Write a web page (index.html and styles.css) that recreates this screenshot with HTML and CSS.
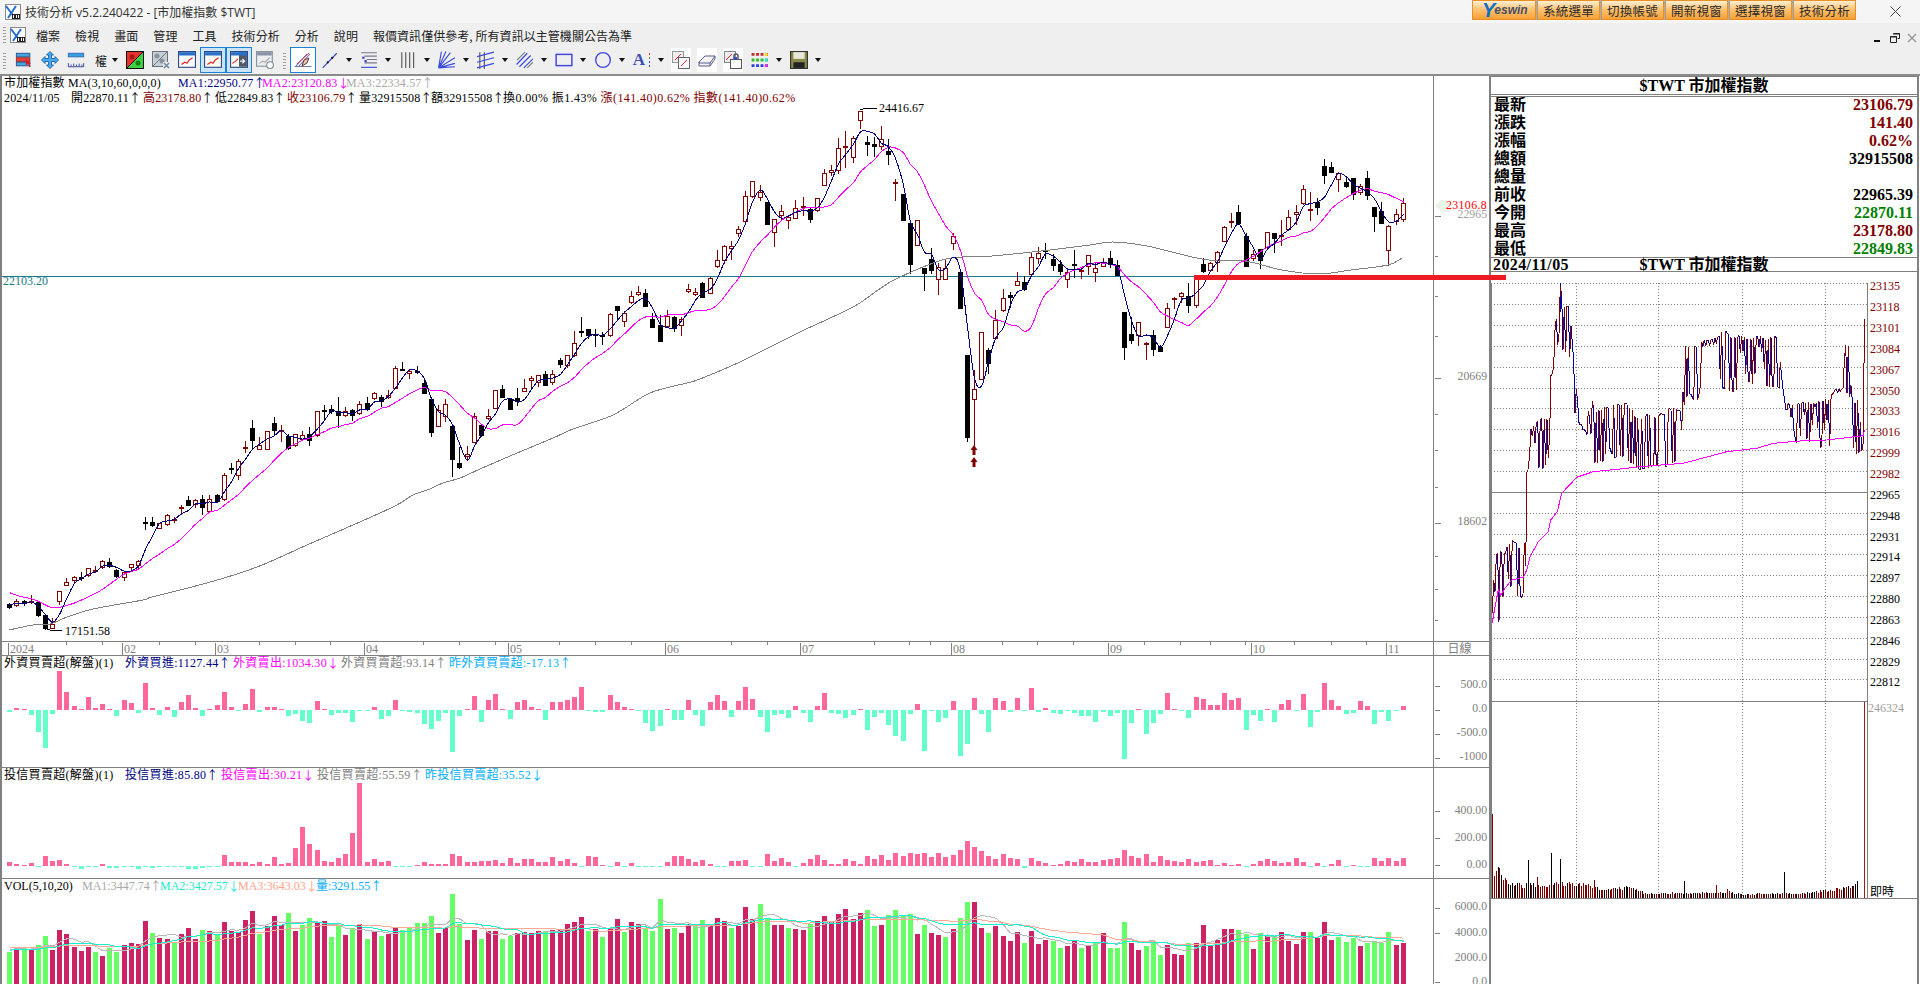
FILE: index.html
```html
<!DOCTYPE html>
<html lang="zh-Hant">
<head>
<meta charset="utf-8">
<title>技術分析 v5.2.240422 - [市加權指數 $TWT]</title>
<link rel="stylesheet" href="styles.css">
</head>
<body>
<div class="app">
  <header class="titlebar">
    <svg class="logo" viewBox="0 0 16 16"><rect x=".5" y=".5" width="15" height="15" fill="#fff" stroke="#8a8a8a"/><path d="M1 2l9 12M11 2L3 14" stroke="#1f6fd0" stroke-width="2" fill="none"/><rect x="7" y="10" width="8" height="5" fill="#222"/><rect x="8" y="11" width="1" height="3" fill="#fff"/><rect x="11" y="11" width="1" height="3" fill="#fff"/><rect x="13" y="11" width="1" height="3" fill="#fff"/></svg>
    <span class="title-text">技術分析 v5.2.240422 - [市加權指數 $TWT]</span>
    <div class="quick">
      <a class="quick-btn yeswin"><b class="y">Y</b><b>eswin</b></a>
      <a class="quick-btn">系統選單</a>
      <a class="quick-btn">切換帳號</a>
      <a class="quick-btn">開新視窗</a>
      <a class="quick-btn">選擇視窗</a>
      <a class="quick-btn">技術分析</a>
    </div>
    <a class="close"><svg viewBox="0 0 11 11" width="11" height="11"><path d="M.5.5l10 10M10.5.5l-10 10" stroke="#444" fill="none"/></svg></a>
  </header>

  <nav class="menubar">
    <i class="grip"></i>
    <svg class="logo" viewBox="0 0 16 16"><rect x=".5" y=".5" width="15" height="15" fill="#fff" stroke="#8a8a8a"/><path d="M1 2l9 12M11 2L3 14" stroke="#1f6fd0" stroke-width="2" fill="none"/><rect x="7" y="10" width="8" height="5" fill="#222"/><rect x="8" y="11" width="1" height="3" fill="#fff"/><rect x="11" y="11" width="1" height="3" fill="#fff"/><rect x="13" y="11" width="1" height="3" fill="#fff"/></svg>
    <ul class="menu">
      <li>檔案</li><li>檢視</li><li>畫面</li><li>管理</li><li>工具</li><li>技術分析</li><li>分析</li><li>說明</li><li>報價資訊僅供參考, 所有資訊以主管機關公告為準</li>
    </ul>
    <div class="win-ctrl">
      <svg viewBox="0 0 10 10" width="10" height="10"><rect x="1" y="7" width="6" height="2" fill="#111"/></svg>
      <svg viewBox="0 0 10 10" width="10" height="10"><path d="M3.5 .5h6v5h-2M.5 3.5h6v6h-6z" fill="none" stroke="#222"/><path d="M3 1h7M0 4h7" stroke="#222"/></svg>
      <svg viewBox="0 0 10 10" width="10" height="10"><path d="M1 1l8 8M9 1l-8 8" stroke="#9a9a9a" stroke-width="1.5" fill="none"/></svg>
    </div>
  </nav>

  <div class="toolbar">
    <i class="grip"></i>
    <span class="tool"><svg class="ic" viewBox="0 0 20 18"><rect x="1.5" y="1.5" width="15" height="4" fill="#45a3e0" stroke="#23568f"/><rect x="1.5" y="6.5" width="15" height="4" fill="#e8403a" stroke="#8f2a2a"/><rect x="1.5" y="11.5" width="15" height="4" fill="#45a3e0" stroke="#23568f"/><path d="M12 8l6 5h-2l1.500 3.500-1.500.5-1.500-3.500-2.500 1.500z" fill="#d8202c"/></svg></span>
    <span class="tool"><svg class="ic" viewBox="0 0 18 18"><path d="M9 .5l3.500 3.500H10.500v3.500H14V5.500L17.500 9 14 12.500V10.500h-3.500V14h2L9 17.500 5.500 14h2v-3.500H4v2L.5 9 4 5.500v2h3.500V4h-2z" fill="#45aaf0" stroke="#2a6aa8"/></svg></span>
    <span class="tool"><svg class="ic" viewBox="0 0 20 18"><rect x="1.500" y="1.500" width="17" height="4" fill="#3aa0e6" stroke="#2a6ab0"/><path d="M1.500 12.500v4h17v-4M4.500 14v2M7.500 13v3M10.500 14v2M13.500 13v3M16.500 14v2" fill="none" stroke="#2d3a9c"/></svg></span>
    <span class="tool narrow"><span class="tool-word">權</span></span><i class="drop"></i>
    <span class="tool"><svg class="ic" viewBox="0 0 18 18"><rect x=".5" y=".5" width="17" height="17" fill="#40d040" stroke="#111"/><path d="M1 1h16L1 17z" fill="#e8302c"/><path d="M17 1L1 17" stroke="#111"/><circle cx="6" cy="6" r="2.500" fill="#a01818"/><circle cx="12" cy="12" r="2.500" fill="#108010"/></svg></span>
    <span class="tool"><svg class="ic" viewBox="0 0 18 18"><rect x=".5" y=".5" width="15" height="15" fill="#c8ced6" stroke="#6a7380"/><path d="M15 1L1 15" stroke="#6a7380"/><circle cx="5" cy="5" r="2.500" fill="#8a929c"/><circle cx="10" cy="10" r="2.500" fill="#8a929c"/><rect x="11" y="11" width="7" height="7" fill="#e8ecf0"/><path d="M12 12l5 5M17 12l-5 5" stroke="#7088a0" stroke-width="1.500"/></svg></span>
    <span class="tool"><svg class="ic" viewBox="0 0 16 16"><rect x=".5" y=".5" width="15" height="14" fill="#fff" stroke="#2a4a8a"/><rect x="1" y="1" width="14" height="3" fill="#2a70c8"/><path d="M3 12l3-2 2 1 2-3 3-2" fill="none" stroke="#e02020"/></svg></span>
    <span class="tool on"><svg class="ic" viewBox="0 0 16 16"><rect x=".5" y=".5" width="15" height="14" fill="#fffdf0" stroke="#2a4a8a"/><rect x="1" y="1" width="14" height="3" fill="#2a70c8"/><path d="M3 12l3-2 2 1 2-3 3-2" fill="none" stroke="#e02020"/></svg></span>
    <span class="tool on"><svg class="ic" viewBox="0 0 16 16"><rect x=".5" y=".5" width="15" height="14" fill="#fffdf0" stroke="#2a4a8a"/><rect x="8" y="1" width="7" height="13" fill="#505a68"/><rect x="1" y="1" width="14" height="3" fill="#2a70c8"/><path d="M2 11l3-2 2-2" fill="none" stroke="#e02020"/><path d="M9 9h4M11 7l2 2-2 2" fill="none" stroke="#fff"/></svg></span>
    <span class="tool"><svg class="ic" viewBox="0 0 16 16"><rect x=".5" y=".5" width="14" height="13" fill="#eceef0" stroke="#8a94a0"/><rect x="1" y="1" width="13" height="3" fill="#8a94a8"/><path d="M3 11l3-2 2 1 4-4" fill="none" stroke="#a8a8a8"/><circle cx="12.500" cy="12.500" r="3" fill="#fff" stroke="#7a8a9a"/></svg></span>
    <i class="grip sep"></i>
    <span class="tool on plain"><svg class="ic" viewBox="0 0 18 18"><path d="M1 16L13 3M4 16L16 3" stroke="#3a5ac8" fill="none"/><path d="M3 13L15 2" stroke="#d83030" fill="none"/><path d="M.5 15.500h17" stroke="#6a7a9a"/><path d="M10 9l5-2-2 5-5 3z" fill="#d8c8b0" stroke="#803030"/></svg></span>
    <span class="tool gap"><svg class="ic" viewBox="0 0 16 16"><path d="M1.500 15L14 2" stroke="#3848c8"/><circle cx="6" cy="10" r="1" fill="#111"/><circle cx="10" cy="6" r="1" fill="#111"/></svg></span><i class="drop"></i>
    <span class="tool"><svg class="ic" viewBox="0 0 16 16"><path d="M1 1.500h14M4 4.500h11M6 7.500h9M4 10.500h11" stroke="#7a7a8a"/><path d="M1 14.500h14" stroke="#3848e0"/><rect x="2" y="5" width="2" height="2" fill="#3848e0"/><rect x="4" y="8" width="2" height="2" fill="#3848e0"/></svg></span><i class="drop"></i>
    <span class="tool"><svg class="ic" viewBox="0 0 14 16"><path d="M1.500 1v14M5 1v14M8.500 1v14M12 1v14" stroke="#555" fill="none"/></svg></span><i class="drop"></i>
    <span class="tool"><svg class="ic" viewBox="0 0 16 16"><path d="M.5 15L15 6M.5 15L15 11M.5 15L11 1.500M.5 15L7 .5M.5 15L3 .5M.5 15L15 14" stroke="#3848e0" fill="none"/></svg></span><i class="drop"></i>
    <span class="tool"><svg class="ic" viewBox="0 0 16 16"><path d="M2.500 1v15M6.500 1v15" stroke="#555"/><path d="M0 5l15-4M0 10l15-4M0 15l15-4" stroke="#3848e0"/></svg></span><i class="drop"></i>
    <span class="tool"><svg class="ic" viewBox="0 0 16 16"><path d="M.5 12L10 2M3 14L13 4M7 15L15 7" stroke="#3848e0" fill="none"/><path d="M1 8L8 1M10 15l5-5" stroke="#808080" fill="none"/></svg></span><i class="drop"></i>
    <span class="tool"><svg class="ic" viewBox="0 0 16 12"><rect x="1" y="1" width="14" height="10" fill="none" stroke="#4048e0" stroke-width="1.300"/></svg></span><i class="drop"></i>
    <span class="tool"><svg class="ic" viewBox="0 0 16 16"><circle cx="8" cy="8" r="6.500" fill="none" stroke="#4048e0" stroke-width="1.200"/></svg></span><i class="drop"></i>
    <span class="tool"><span class="tool-a">A</span><svg class="dots-a" viewBox="0 0 2 14"><rect width="1" height="2" fill="#d03030"/><rect y="4" width="1" height="2" fill="#30a030"/><rect y="8" width="1" height="2" fill="#3040d0"/><rect y="12" width="1" height="2" fill="#3040d0"/></svg></span><i class="drop"></i>
    <span class="tool box"><svg class="ic" viewBox="0 0 18 18"><rect x=".5" y=".5" width="11" height="11" fill="#eee" stroke="#999"/><rect x="6.500" y="6.500" width="11" height="11" fill="#fff" stroke="#666"/><path d="M3 9l6-6M9 15l6-6" stroke="#e02030"/></svg></span>
    <span class="tool box"><svg class="ic" viewBox="0 0 18 18"><path d="M1 11l6-6h10l-5 7H1zM1 11v4h11v-3M17 5v3l-5 7" fill="#f4f4f4" stroke="#555a90"/></svg></span>
    <span class="tool box"><svg class="ic" viewBox="0 0 18 18"><rect x=".5" y=".5" width="11" height="11" fill="#eee" stroke="#888"/><path d="M2 9l6-6" stroke="#e02030"/><rect x="6.500" y="8.500" width="11" height="9" fill="#fff" stroke="#556"/><path d="M10 8V5a2 2 0 014 0v3" fill="none" stroke="#556" stroke-width="1.500"/><rect x="10" y="6" width="3" height="3" fill="#3050c0"/></svg></span>
    <span class="tool gap"><svg class="ic" viewBox="0 0 16 14"><g stroke-width="2.600" stroke-dasharray="2.600 1.400" fill="none"><path d="M.5 2h15" stroke="#c03030"/><path d="M.5 7h15" stroke="#30c030"/><path d="M.5 12h15" stroke="#3040e0"/></g><circle cx="13.500" cy="2" r="1.400" fill="#f0e020"/><circle cx="13.500" cy="7" r="1.400" fill="#30e8f0"/><circle cx="13.500" cy="12" r="1.400" fill="#f030e0"/></svg></span><i class="drop"></i>
    <span class="tool"><svg class="ic" viewBox="0 0 16 16"><rect x=".5" y=".5" width="15" height="15" fill="#8a8a48" stroke="#333"/><rect x="3" y="1" width="10" height="6" fill="#e8e8d8"/><rect x="3" y="10" width="10" height="5" fill="#222"/></svg></span><i class="drop"></i>
  </div>

  <main class="workspace">
    <section class="charts">
      <div class="pane pane-price">
        <div class="plot">
          <svg class="gfx" id="price"></svg>
          <div class="legend legend-price">
            <div><span class="lead w174">市加權指數 MA(3,10,60,0,0,0)</span><span class="blk w84 navy">MA1:22950.77<i class="ar">↑</i></span><span class="blk w84 mag">MA2:23120.83<i class="ar">↓</i></span><span class="blk silver">MA3:22334.57<i class="ar">↑</i></span></div>
            <div><span class="lead w67">2024/11/05</span><span class="blk w72">開22870.11<i class="ar">↑</i></span><span class="blk w72"><span class="red">高23178.80</span><i class="ar">↑</i></span><span class="blk w72">低22849.83<i class="ar">↑</i></span><span class="blk w72"><span class="red">收23106.79</span><i class="ar">↑</i></span><span class="blk w72">量32915508<i class="ar">↑</i></span><span class="blk w72">額32915508<i class="ar">↑</i></span><span class="tail">換0.00% 振1.43% <span class="red">漲(141.40)0.62% 指數(141.40)0.62%</span></span></div>
          </div>
        </div>
        <svg class="gfx scale" id="price-scale"></svg>
      </div>
      <div class="pane pane-axis">
        <div class="plot"><svg class="gfx" id="axis"></svg></div>
        <div class="scale scale-word">日線</div>
      </div>
      <div class="pane pane-foreign">
        <div class="plot">
          <svg class="gfx" id="foreign"></svg>
          <div class="legend legend-ind"><span class="lead w121">外資買賣超(解盤)(1)</span><span class="blk w108 navy">外資買進:1127.44<i class="ar">↑</i></span><span class="blk w108 mag">外資賣出:1034.30<i class="ar">↓</i></span><span class="blk w108 gray">外資買賣超:93.14<i class="ar">↑</i></span><span class="blk sky">昨外資買賣超:-17.13<i class="ar">↑</i></span></div>
        </div>
        <svg class="gfx scale" id="foreign-scale"></svg>
      </div>
      <div class="pane pane-trust">
        <div class="plot">
          <svg class="gfx" id="trust"></svg>
          <div class="legend legend-ind"><span class="lead w121">投信買賣超(解盤)(1)</span><span class="blk w96 navy">投信買進:85.80<i class="ar">↑</i></span><span class="blk w96 mag">投信賣出:30.21<i class="ar">↓</i></span><span class="blk w108 gray">投信買賣超:55.59<i class="ar">↑</i></span><span class="blk sky">昨投信買賣超:35.52<i class="ar">↓</i></span></div>
        </div>
        <svg class="gfx scale" id="trust-scale"></svg>
      </div>
      <div class="pane pane-vol">
        <div class="plot">
          <svg class="gfx" id="vol"></svg>
          <div class="legend"><span class="lead w78">VOL(5,10,20)</span><span class="blk w78 silver">MA1:3447.74<i class="ar">↑</i></span><span class="blk w78 teal">MA2:3427.57<i class="ar">↓</i></span><span class="blk w78 salmon">MA3:3643.03<i class="ar">↓</i></span><span class="blk sky">量:3291.55<i class="ar">↑</i></span></div>
        </div>
        <svg class="gfx scale" id="vol-scale"></svg>
      </div>
    </section>

    <aside class="quote">
      <div class="quote-title">$TWT 市加權指數</div>
      <dl class="quote-table">
        <div><dt>最新</dt><dd class="red">23106.79</dd></div>
        <div><dt>漲跌</dt><dd class="red">141.40</dd></div>
        <div><dt>漲幅</dt><dd class="red">0.62%</dd></div>
        <div><dt>總額</dt><dd>32915508</dd></div>
        <div><dt>總量</dt><dd></dd></div>
        <div><dt>前收</dt><dd>22965.39</dd></div>
        <div><dt>今開</dt><dd class="green">22870.11</dd></div>
        <div><dt>最高</dt><dd class="red">23178.80</dd></div>
        <div><dt>最低</dt><dd class="green">22849.83</dd></div>
      </dl>
      <div class="quote-date"><span class="date">2024/11/05</span><span class="date-name">$TWT 市加權指數</span></div>
      <svg class="gfx intraday" id="intraday"></svg>
    </aside>

    <div class="mark-bar"></div>
  </main>
</div>
<script src="app.js"></script>
</body>
</html>
```

FILE: styles.css
```css
* { box-sizing: border-box; }
html, body { margin: 0; height: 100%; overflow: hidden; background: #fff; }
body { font: 12px "Liberation Serif", "Noto Sans CJK TC", serif; color: #000; }
.app { height: 984px; display: flex; flex-direction: column; }

.titlebar { height: 23px; flex: none; display: flex; align-items: center; background: #f5f5f5; padding-left: 5px;
  font: 12px "Open Sans", "Noto Sans CJK TC", sans-serif; color: #333; }
.logo { width: 16px; height: 16px; flex: none; }
.title-text { margin-left: 4px; white-space: nowrap; }
.quick { margin-left: auto; display: flex; gap: 1px; align-self: flex-start; height: 20px; background: #8fb0dc; }
.quick-btn { width: 63px; height: 20px; display: flex; align-items: center; justify-content: center; color: #2a2a2a;
  font: 12.500px "Noto Sans CJK TC", sans-serif; letter-spacing: .2px;
  border: 1px solid #ea8f20; border-radius: 1px; background: linear-gradient(#ffefd6, #ffc474 45%, #f7a036); }
.yeswin { width: 64px; font: italic 12px "Liberation Sans", sans-serif; color: #44506a; justify-content: flex-start; padding-left: 9px; }
.yeswin b { letter-spacing: 0; }
.yeswin .y { color: #0b6fc8; font-size: 20px; line-height: 16px; margin-right: -1px; }
.close { width: 46px; margin-left: 16px; margin-right: 2px; display: flex; justify-content: center; }

.menubar { height: 24px; flex: none; display: flex; align-items: center; background: #efefef; padding-left: 3px;
  font: 12px "Noto Sans CJK TC", sans-serif; color: #222; }
.grip { width: 3px; height: 16px; flex: none; background: repeating-linear-gradient(#a0a0a0 0 1px, transparent 1px 3px); }
.menubar .logo { margin-left: 4px; }
.menu { display: flex; list-style: none; margin: 0 0 0 2.500px; padding: 0; white-space: nowrap; }
.menu li { padding: 0 7.500px; letter-spacing: .05px; }
.win-ctrl { margin-left: auto; display: flex; gap: 7px; align-self: flex-start; margin-top: 10px; margin-right: 3px; }

.toolbar { height: 29px; flex: none; display: flex; align-items: flex-start; background: #efefef; border-bottom: 2px solid #8c8c8c; padding-left: 3px; }
.toolbar > .grip { align-self: center; margin-right: 4.500px; }
.tool { width: 26px; height: 26px; flex: none; display: flex; align-items: center; justify-content: center; position: relative; }
.tool.narrow { width: 20.500px; justify-content: flex-end; padding-right: 2px; }
.tool-word { font: 12px "Noto Sans CJK TC", sans-serif; color: #111; }
.tool.on { background: #cde4f7; border: 1.500px solid #1a80d8; }
.tool.plain { background: #fff; }
.tool.gap { margin-left: 1px; }
.tool.box { background: #fff; height: 24px; width: 20px; margin: 1px 3px; }
.ic { width: 18px; height: 18px; }
.grip.sep { width: 3px; margin: 0 4px 0 5px; align-self: center; }
.drop { width: 13px; height: 26px; flex: none; position: relative; }
.drop::after { content: ""; position: absolute; left: 3px; top: 11px; border: 3.500px solid transparent; border-top: 4px solid #111; border-bottom: 0; }
.tool-a { font: bold 17px "Liberation Serif", serif; color: #3a4db0; margin-right: 4px; }
.dots-a { width: 2px; height: 14px; }

.workspace { flex: 1; min-height: 0; display: flex; position: relative; overflow: hidden; }
.charts { width: 1489px; flex: none; display: flex; flex-direction: column; border-left: 2px solid #808080; }
.pane { display: flex; flex: none; border-bottom: 1px solid #808080; }
.pane-price { height: 566px; }
.pane-axis { height: 14px; }
.pane-foreign { height: 112px; }
.pane-trust { height: 111px; }
.pane-vol { flex: 1; min-height: 0; border-bottom: 0; }
.plot { width: 1431px; flex: none; position: relative; overflow: hidden; }
.plot .gfx { width: 100%; height: 100%; }
.gfx { display: block; }
.scale { flex: 1; min-width: 0; height: 100%; border-left: 1px solid #808080; }
.scale-word { display: flex; justify-content: center; padding-right: 4px; line-height: 15px; color: #808080; }

.legend { position: absolute; left: 2px; top: 0; white-space: nowrap; line-height: 14px; height: 14px; }
.legend-price { line-height: 15px; height: 30px; letter-spacing: .15px; }
.legend-price > div { height: 15px; }
.legend-ind { letter-spacing: .3px; }
.lead, .blk { display: inline-block; vertical-align: top; }
.tail { letter-spacing: .4px; }
.ar { display: inline-block; width: 11px; height: 14px; text-align: center; font: 12px/14px "Noto Sans CJK TC", sans-serif; letter-spacing: 0; vertical-align: top; }
.w67 { width: 67px; }
.w72 { width: 72px; }
.w78 { width: 78px; }
.w84 { width: 84px; }
.w96 { width: 96px; }
.w108 { width: 108px; }
.w121 { width: 121px; }
.w174 { width: 174px; }
.navy { color: #000080; }
.mag { color: #f0f; }
.gray { color: #808080; }
.sky { color: #00aeff; }
.silver { color: #a8a8a8; }
.teal { color: #19e8c8; }
.salmon { color: #ffa48c; }
.red { color: #800000; }
.green { color: #008000; }

.quote { flex: 1; min-width: 0; display: flex; flex-direction: column; border-left: 2px solid #808080; border-right: 2px solid #808080; margin-right: 1px;
  font: 16px "Liberation Serif", "Noto Sans CJK TC", serif; }
.quote-title { height: 21px; flex: none; border-top: 1px solid #808080; border-bottom: 3px double #808080; text-align: center; font-weight: 700; line-height: 18px; overflow: hidden; }
.quote-table { height: 160px; flex: none; margin: 0; overflow: hidden; }
.quote-table div { height: 18px; line-height: 16px; display: flex; justify-content: space-between; padding: 0 4px 0 3px; font-weight: 700; }
.quote-table dt, .quote-table dd { margin: 0; }
.quote-date { height: 15px; flex: none; position: relative; border-top: 1px solid #808080; border-bottom: 1px solid #808080; line-height: 14px; font-weight: 700; text-align: center; }
.date { position: absolute; left: 2px; top: 0; letter-spacing: .4px; }
.intraday { flex: 1; min-height: 0; width: 100%; }

.mark-bar { position: absolute; left: 1194px; top: 199px; width: 312px; height: 5px; background: #ed1c24; }

.gfx text { font: 12px "Liberation Serif", "Noto Sans CJK TC", serif; }
.gfx .t-black { fill: #000; }
.gfx .t-gray { fill: #808080; }
.gfx .t-lgray { fill: #a0a0a0; }
.gfx .t-red { fill: #f00; letter-spacing: .4px; }
.gfx .t-maroon { fill: #800000; }
.gfx .t-teal { fill: #1b7b87; }
.crisp { shape-rendering: crispEdges; }
.ma { fill: none; stroke-width: 1; shape-rendering: crispEdges; }
```

FILE: app.js
```js
// Data below is recorded in pixels of the chart image; every SVG's viewBox equals its page box, so y/x are page coordinates.
const X0 = 9.3, DX = 7.146;
const xAt = i => Math.round(X0 + i * DX);
const parseGroup = (oy, s) => s.trim().split(/\s+/).map(t => {
  const [hi, top, bot, lo] = t.slice(1).split(',').map(v => oy + v / 3);
  return { up: t[0] === 'u', hi, top, bot, lo };
});
const candles = [
  ...parseGroup(400, `d610,612,620,624 u598,604,616,618 d600,604,609,616 u586,604,607,609 d604,607,645,648 d644,645,684,686 u655,672,683,684 u574,574,602,612 u535,546,554,554 u528,531,540,546 d517,530,532,540 u503,505,526,528 u498,509,511,516 u480,482,502,505 d474,487,497,500 d508,511,528,530 u512,516,530,540 u492,493,502,510 u480,484,494,503 d350,365,367,386 d350,366,374,377 u368,370,383,384 u343,344,373,375 u350,358,360,366 u316,322,325,343 d288,300,314,315 u296,300,312,320 d285,298,320,342 u285,298,332,333 d283,286,302,304 u220,226,298,300 d190,205,207,218 u178,184,226,236 u122,141,143,155 d60,85,120,144 u112,136,146,148 u92,94,146,146 d52,70,90,106 u74,90,94,123 d102,108,143,146 u102,103,136,138 u94,106,118,120 d80,103,120,134 u32,34,106,108 d14,29,31,60 d14,28,34,38 d-9,32,46,80 u22,34,44,48 d28,30,44,60 u4,12,40,42 d-10,8,27,30`),
  ...parseGroup(220, `u517,518,535,536 d525,532,544,557 u510,525,532,534 u438,445,503,505 d426,448,450,450 u450,454,459,474 d438,452,456,460 d480,488,518,518 d530,537,636,648 u555,570,617,617 u537,553,588,602 d612,618,717,768 d680,729,742,744 u678,703,709,720 u580,589,665,667 d612,615,645,647 u568,589,594,598 u510,511,563,565 d495,507,530,532 d536,538,566,567 d504,534,544,556 u478,505,512,513 u468,474,479,506 u465,466,486,498 d454,463,494,495 u451,463,487,491 d414,420,432,440 u404,406,434,440 u334,370,404,407 d292,333,335,347 d328,328,344,354 d327,343,346,378 d335,346,349,371 u280,283,346,347 d258,259,269,295 u272,280,304,317 u212,229,247,249 u198,217,223,224 d207,220,257,258 d280,297,320,320 d285,316,362,362 u270,287,317,320 d288,291,323,332 u292,298,316,345 u193,208,214,216 u205,217,223,225`),
  ...parseGroup(100, `d545,549,590,590 u530,535,578,580 u450,481,498,500 u435,439,479,490 u423,437,443,478 u378,386,398,408 u273,287,362,365 u243,244,288,290 u256,277,290,300 d305,306,371,372 u358,358,395,438 u315,334,345,356 u350,352,359,385 u300,325,353,355 u292,318,322,345 d325,327,357,366 u295,295,330,332 u207,220,254,255 u196,211,216,225 u113,145,211,220 u92,137,141,200 u108,115,170,186 u32,34,61,84 d108,126,133,165 d112,131,139,168 u78,118,139,147 d118,152,163,192 u237,245,250,300 d282,282,359,360 d368,369,491,518 u360,361,434,435 d503,503,518,570 d445,478,510,518 u490,500,536,582`),
  ...parseGroup(90, `u510,535,566,567 u430,439,458,477 d545,547,653,654 d794,795,1041,1052 u840,898,928,1065 u726,727,866,866 d775,781,819,850 u660,690,743,745 u598,625,661,663 d605,614,620,650 u545,572,584,585 d557,577,597,599 u490,502,551,553 u472,490,503,520 d460,479,483,505 d492,507,525,540 d510,522,542,553 u540,545,566,590 d480,522,525,560 u530,540,543,564 u495,496,527,552 u515,535,545,572 u503,517,527,527 d483,505,522,530 d510,525,555,556 d666,666,770,806 d680,732,750,760 u695,697,735,765 u755,758,762,806 d720,736,776,795 d765,770,782,783 u640,653,710,711 u622,625,628,655 u605,610,618,635 d580,617,645,665 u567,568,645,652 d503,522,543,547 u515,518,540,542 u484,485,515,543 u408,412,452,453 u370,393,396,410 d345,367,400,401 d428,438,527,528 u480,493,503,510 d478,478,510,533 u425,427,472,473 d428,428,444,485 u390,435,438,465 u360,382,418,420 u345,367,371,403 u285,298,340,343 u305,358,361,390 d325,335,350,372 d207,229,256,278 d215,231,245,246 u247,250,268,303 d265,276,287,292 d265,265,312,328 u283,287,307,312 d243,265,316,326 d350,351,377,423 d335,364,399,400 u405,409,481,525 u357,371,394,403 u325,340,388,392`)
];

const foreign = [-5,5,3,-15,-66,-114,-11,117,54,12,3,39,6,18,3,-18,30,21,-8,81,6,-15,9,-21,24,45,6,-18,3,15,54,9,-3,18,63,-6,9,9,2,-18,-12,-33,-39,27,3,-15,-9,-9,-36,-2,-2,9,-27,-18,30,-3,-6,-9,-42,-57,-33,-9,-126,-18,2,42,-36,30,48,3,-27,24,30,9,3,-30,24,24,30,39,69,-3,-6,-6,45,24,9,3,-3,-39,-63,-48,3,-30,-30,30,-15,
  -48,24,45,27,-21,27,69,33,-21,-66,-15,-12,-24,12,-9,-36,12,51,-9,-12,-24,-15,3,-60,-21,-9,-45,-78,-93,-12,18,-123,-3,-36,-24,27,-138,-102,36,-12,-66,36,27,-6,36,-3,66,-6,6,-9,-12,-3,-9,-18,-18,-36,-6,-18,-9,-147,-39,2,-72,-39,-12,51,3,-3,-24,39,33,15,15,51,30,36,-60,-15,-33,3,-36,18,30,-3,48,-51,-6,81,30,12,-12,-9,27,12,-42,-6,-33,-3,12];
const trust = [12,6,3,9,-2,30,15,18,6,-2,-8,-2,-2,6,-6,-5,-2,-2,-8,-2,-6,-2,-3,-2,-2,-8,-9,-6,-2,-2,33,12,12,12,6,12,6,27,6,9,54,117,66,48,15,12,24,36,99,249,12,21,12,15,-2,-2,-2,3,12,6,6,6,36,30,12,12,15,15,18,9,24,9,21,21,12,12,27,15,21,9,-3,30,27,2,-2,12,-3,9,-3,-2,-2,-3,12,30,30,21,12,
  18,6,-2,-2,15,15,18,-2,-2,36,15,24,12,-2,9,21,33,18,6,6,21,15,6,30,21,33,18,39,30,39,36,39,27,39,27,33,48,75,57,45,30,21,36,24,21,-5,24,15,9,3,6,15,12,21,12,12,18,21,24,48,30,24,36,12,30,18,15,12,21,12,15,18,3,9,3,6,-2,6,15,21,15,9,12,24,12,-2,9,-2,6,18,-2,3,-2,-2,24,15,24,15,24];
const volA = `g1176 r1160 g1165 r1170 g1155 g1128 r1170 r1110 r1122 r1160 r1173 r1160 g1176 r1188 g1163 g1176 r1155 r1149 r1152 r1083 g1119 r1134 r1137 g1146 r1122 r1104 r1137 g1110 r1113 g1125 r1086 r1113 r1116 r1080 r1053 g1122 r1098 r1068 r1095 g1059 r1113 g1095 g1074 r1089 r1083 g1131 g1095 r1125 g1104 r1092 g1137 r1116 g1128 r1122 r1104 g1110 g1104 g1089 g1089 g1068 r1119 r1104 g1002 g1092 r1140 r1110 g1137 r1113 r1113 g1137 g1128 r1119 r1116 r1119 r1113 g1113 r1110 r1110 r1092 r1086 r1071 g1113 r1107 g1131 r1107 r1077 g1116 r1086 r1092 g1104 g1113 g1017 r1107 g1104 r1119 r1092 g1098`;
const volB = `g840 r859 r834 r843 g864 r857 r801 r837 g792 g838 r855 r855 g864 r867 r870 g852 r843 r828 r846 r822 r807 r837 r819 g810 g858 r855 g825 g810 g825 g822 r882 g855 r879 r885 g891 r867 g834 g786 r786 r864 g879 r858 r888 r903 r876 g909 r873 r912 r900 g903 g924 r917 r900 g924 r917 g910 r879 g924 g924 g846 r909 r930 g918 g903 g945 r915 r942 r945 g909 r909 r855 r917 r900 r867 r867 g870 g882 r927 g879 r885 g888 r876 r903 r912 r876 g876 r894 r846 r900 g891 g906 g894 r918 g909 g903 g909 g876 r915 r909`;
const vol = [...volA.trim().split(/\s+/).map(t => ({ up: t[0] === 'r', top: 560 + t.slice(1) / 3 })),
             ...volB.trim().split(/\s+/).map(t => ({ up: t[0] === 'r', top: 640 + t.slice(1) / 3 }))];

const ma3Curve = [[9,630],[33,625],[50,624],[67,617],[93,609],[143,600],[152,597],[207,583],[240,573],[267,563],[307,545],[330,535],[393,507],[413,495],[430,489],[443,483],[460,478],[480,469],[510,456],[553,438],[573,429],[613,415],[650,393],[687,383],[700,379],[740,362],[780,342],[804,330],[853,307],[878,290],[894,280],[923,267],[951,258],[992,256],[1041,251],[1090,245],[1113,242],[1147,246],[1188,256],[1209,260],[1245,261],[1282,270],[1319,274],[1351,270],[1388,265],[1402,258]];

function movingAvg(values, n, seed) {
  const all = [...seed, ...values];
  return values.map((_, i) => {
    const end = seed.length + i + 1, win = all.slice(Math.max(0, end - n), end);
    return win.reduce((a, b) => a + b, 0) / win.length;
  });
}
function spline(p) {
  let d = `M${p[0][0]} ${p[0][1].toFixed(1)}`;
  for (let i = 0; i < p.length - 1; i++) {
    const a = p[i - 1] || p[i], b = p[i], c = p[i + 1], e = p[i + 2] || c;
    d += `C${(b[0] + (c[0] - a[0]) / 6).toFixed(1)} ${(b[1] + (c[1] - a[1]) / 6).toFixed(1)} ${(c[0] - (e[0] - b[0]) / 6).toFixed(1)} ${(c[1] - (e[1] - b[1]) / 6).toFixed(1)} ${c[0]} ${c[1].toFixed(1)}`;
  }
  return d;
}
const maPath = (ys, color, w = 1) => `<path class="ma" d="${spline(ys.map((y, i) => [xAt(i) + .5, y]))}" stroke="${color}" stroke-width="${w}"/>`;
const text = (x, y, s, cls, anchor) => `<text x="${x}" y="${y}" class="${cls}"${anchor ? ` text-anchor="${anchor}"` : ''}>${s}</text>`;
const rect = (x, y, w, h, fill) => `<rect x="${x}" y="${y}" width="${w}" height="${h}" fill="${fill}"/>`;

function paint(id, html) {
  const el = document.getElementById(id), r = el.getBoundingClientRect();
  el.setAttribute('viewBox', `${r.left} ${r.top} ${r.width} ${r.height}`);
  el.innerHTML = html;
}

/* price pane */
const MAROON = '#800000';
function candleSvg(c, i) {
  const x = xAt(i), col = c.up ? MAROON : '#000';
  const t = Math.round(c.top), b = Math.round(c.bot), hi = Math.round(c.hi), lo = Math.round(c.lo);
  let s = rect(x, hi, 1, lo - hi + 1, col);
  if (b - t <= 1) s += rect(x - 2, t, 5, Math.max(2, b - t), col);
  else if (c.up) s += `<rect x="${x - 1.5}" y="${t + .5}" width="4" height="${b - t}" fill="#fff" stroke="${col}"/>`;
  else s += rect(x - 2, t, 5, b - t + 1, col);
  return s;
}
const closes = candles.map(c => c.up ? c.top : c.bot);
const ma1 = movingAvg(closes, 3, [604, 603]);
const ma2 = movingAvg(closes, 10, [575, 582, 585, 590, 592, 595, 598, 600, 602]);
paint('price',
  rect(2, 276, 1431, 1, '#1b7b87').replace('<rect', '<rect class="crisp"') +
  text(3, 285, '22103.20', 't-teal') +
  `<g class="crisp">${candles.map(candleSvg).join('')}</g>` +
  `<path class="ma" d="${spline(ma3Curve)}" stroke="#808080"/>` +
  maPath(ma2, '#f0f') + maPath(ma1, '#000080') +
  `<path class="ma" d="M860 110L864 108.500H877" stroke="#000"/>` + text(879, 112, '24416.67', 't-black') +
  `<path class="ma" d="M43 627.500L50 630L62 631" stroke="#000"/>` + text(65, 635, '17151.58', 't-black') +
  `<path d="M974 445l3.500 5h-2v5h-3v-5h-2zM974 457l3.500 5h-2v5h-3v-5h-2z" fill="${MAROON}"/>`);

const ticks = (ys, long) => ys.map(y => rect(1434, y, long ? 6 : 3, 1, '#808080')).join('');
paint('price-scale',
  `<g class="crisp">${ticks([213, 378, 526], true)}${ticks([254, 295, 336, 415, 452, 489, 560, 593, 625])}</g>` +
  '<path d="M1434 203l7-6h5v12h-5z" fill="#e8f4e8"/>' +
  text(1487, 215, '22965', 't-lgray', 'end') + text(1487, 206, '23106.8', 't-red', 'end') +
  text(1487, 380, '20669', 't-gray', 'end') + text(1487, 528, '18602', 't-gray', 'end'));

/* date axis */
const months = [[10,'2024'],[124,'02'],[217,'03'],[366,'04'],[510,'05'],[667,'06'],[802,'07'],[953,'08'],[1110,'09'],[1253,'10'],[1388,'11']];
const axisTicks = [66,102,159,195,259,295,330,423,459,495,559,595,631,731,767,874,909,930,1002,1037,1073,1144,1180,1210,1245,1294,1331,1366];
paint('axis', `<g class="crisp">${axisTicks.map(x => rect(x, 642, 1, 3, '#808080')).join('')}${months.map(m => rect(m[0] - 2, 643, 1, 12, '#808080')).join('')}</g>` +
  months.map(m => text(m[0], 653, m[1], 't-gray')).join(''));

/* indicator bars */
const bars = (data, zero) => `<g class="crisp">${data.map((v, i) => {
  const h = Math.max(1, Math.round(Math.abs(v) / 3));
  return rect(xAt(i) - 2, v > 0 ? zero - h : zero, 5, h, v > 0 ? '#ff6699' : '#66ffcc');
}).join('')}</g>`;
paint('foreign', bars(foreign, 710));
paint('trust', bars(trust, 866));
const scaleTicks = rows => `<g class="crisp">${rows.map(r => rect(1434, r[0], 5, 1, '#808080')).join('')}</g>` +
  rows.map(r => text(1487, r[1], r[2], 't-gray', 'end')).join('');
paint('foreign-scale', scaleTicks([[686, 688, '500.0'], [710, 712, '0.0'], [734, 736, '-500.0'], [759, 761, '-1000']]));
paint('trust-scale', scaleTicks([[811, 814, '400.00'], [838, 841, '200.00'], [866, 869, '0.00']]));
paint('vol-scale', scaleTicks([[908, 910, '6000.0'], [933, 936, '4000.0'], [959, 962, '2000.0'], [983, 986, '0.0']]));

const volTops = vol.map(v => v.top);
paint('vol',
  `<g class="crisp">${vol.map((v, i) => { const t = Math.round(v.top); return rect(xAt(i) - 2, t, 5, 990 - t, v.up ? '#cc2266' : '#66ff66'); }).join('')}</g>` +
  maPath(movingAvg(volTops, 5, [948, 948, 950, 948]), '#b8b8b8') +
  maPath(movingAvg(volTops, 20, Array(19).fill(947)), '#ffaa96') +
  maPath(movingAvg(volTops, 10, Array(9).fill(950)), '#18f0d0'));

/* intraday */
let seed = 7;
const rnd = () => (seed = (seed * 1103515245 + 12345) & 0x7fffffff) / 0x7fffffff;
const lerpTable = (table, x) => {
  let k = 0;
  while (k < table.length - 2 && table[k + 1][0] < x) k++;
  const a = table[k], b = table[k + 1], f = Math.min(1, Math.max(0, (x - a[0]) / (b[0] - a[0])));
  return a.slice(1).map((v, j) => v + (b[j + 1] - v) * f);
};
const env = [[37,1020,1090],[45,900,1000],[52,870,1090],[60,870,1100],[70,890,1000],[85,850,960],[97,840,1000],[108,840,1010],[118,860,1010],[128,890,1015],[135,830,960],[138,720,900],[142,600,720],[146,510,600],[160,500,510],[175,480,630],[190,470,630],[205,480,600],[212,380,460],[218,165,320],[225,210,320],[240,70,200],[250,135,280],[268,130,280],[282,310,460],[298,480,490],[320,520,530],[330,380,480],[340,440,620],[350,450,610],[370,440,610],[385,440,560],[405,430,600],[420,430,590],[440,430,600],[465,460,620],[480,480,635],[500,460,630],[520,470,620],[540,460,620],[560,450,620],[580,440,610],[600,450,610],[608,440,450],[612,260,440],[625,255,400],[640,255,420],[650,255,430],[660,255,400],[668,240,260],[690,240,258],[700,235,255],[715,230,250],[722,210,380],[740,210,400],[755,225,400],[770,225,390],[785,228,240],[800,230,370],[820,230,375],[840,228,240],[860,240,380],[880,225,380],[895,230,385],[905,350,390],[912,410,445],[930,435,455],[955,430,585],[970,425,440],[985,425,575],[1005,430,440],[1022,420,580],[1040,415,470],[1050,420,575],[1060,390,400],[1090,385,395],[1095,250,400],[1108,260,410],[1115,420,430],[1122,425,590],[1133,415,585],[1150,565,570]];
const toX = z => +(1480 + z / 3).toFixed(1), toY = z => +(260 + z / 3).toFixed(1);
let upD = '', downD = 'M1560 283L1560 312', prev = [toX(37), toY(1060)], atTop = false;
for (let z = 41; z <= 1150; z += 4) {
  const [t, b] = lerpTable(env, z);
  if (rnd() < .7) atTop = !atTop;
  const span = b - t, v = atTop ? t + span * .05 * rnd() : b - span * .05 * rnd();
  const p = [toX(z), toY(v)], seg = `M${prev[0]} ${prev[1]}L${p[0]} ${p[1]}`;
  if (p[1] <= prev[1]) upD += seg; else downD += seg;
  prev = p;
}
upD += `M${prev[0]} ${prev[1]}L${toX(1151)} ${toY(370)}L${toX(1154)} ${toY(178)}`;

const vwap = [[37,1088],[45,1040],[55,990],[62,1005],[75,985],[95,960],[130,952],[140,930],[150,890],[175,845],[205,815],[212,780],[232,755],[245,700],[290,652],[340,635],[420,627],[480,620],[610,610],[740,575],[830,565],[880,550],[960,543],[1040,540],[1150,527],[1153,510]];

const gridY = k => Math.round(283.3 + 20.85 * k);
const labels = [23135,23118,23101,23084,23067,23050,23033,23016,22999,22982,22965,22948,22931,22914,22897,22880,22863,22846,22829,22812];
let grid = '', scaleText = '';
labels.forEach((v, k) => {
  const y = gridY(k);
  grid += v === 22965 ? rect(1491, y, 377, 1, '#808080') : `<path d="M1491 ${y + .5}H1867" stroke="#808080" stroke-dasharray="1 2"/>`;
  scaleText += text(1870, y + 7, v, k < 10 ? 't-maroon' : 't-black');
});
[1576, 1658, 1742, 1825].forEach(x => { grid += `<path d="M${x + .5} 283V898" stroke="#808080" stroke-dasharray="1 2"/>`; });

const volEnv = [[486,60],[495,90],[505,90],[515,60],[530,45],[560,40],[590,45],[600,40],[660,45],[700,45],[740,40],[760,25],[825,30],[850,25],[870,15],[1000,15],[1080,20],[1115,12],[1260,14],[1340,25],[1400,35],[1410,50]];
const spikes = { 486: 252, 576: 115, 598: 62, 635: 135, 659: 117, 742: 54, 825: 36, 972: 50, 1055: 38, 1080: 28, 1225: 78 };
let volBars = '';
for (let z = 486; z < 1412; z += 4.5) {
  let h = lerpTable(volEnv, z)[0] * (.75 + .4 * rnd());
  for (const key in spikes) if (Math.abs(z - key) < 2.3) h = spikes[key];
  const x = Math.round(1300 + z / 2.529);
  volBars += rect(x, Math.round(898 - h / 3), 1, Math.round(h / 3), rnd() < .58 ? MAROON : '#000');
}
volBars += rect(1864, 702, 1, 196, '#a01818') + rect(1492, 814, 1, 84, MAROON);

paint('intraday',
  `<g class="crisp">${grid}${rect(1491, 283, 1, 615, '#808080')}${rect(1867, 283, 1, 615, '#808080')}${rect(1491, 898, 428, 1, '#808080')}${rect(1491, 701, 377, 1, '#808080')}${volBars}</g>` +
  `<path class="ma" d="${downD}" stroke="#0000a0"/><path class="ma" d="${upD}" stroke="${MAROON}"/>` +
  `<path class="ma" d="M${vwap.map(p => `${toX(p[0])} ${toY(p[1])}`).join('L')}" stroke="#f0f" stroke-width="1.300"/>` +
  scaleText + text(1868, 712, '246324', 't-lgray') + text(1870, 896, '即時', 't-black'));
```
